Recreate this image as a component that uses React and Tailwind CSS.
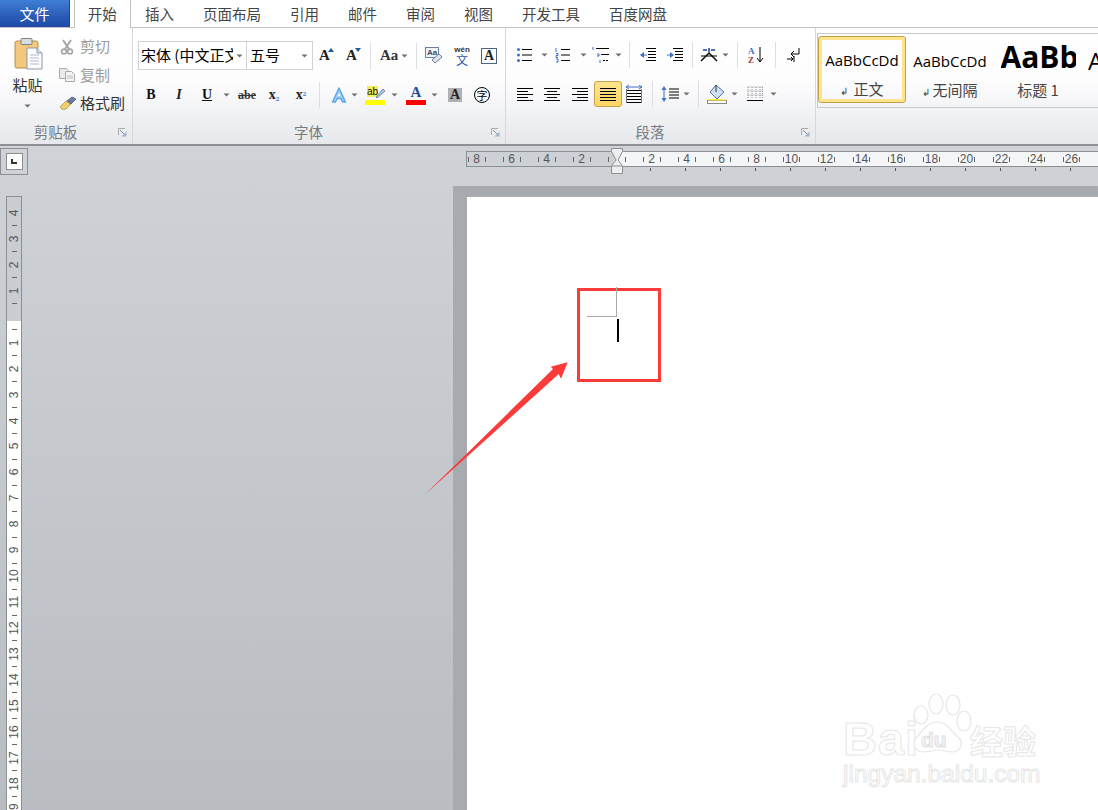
import React from "react";

const CJK = `font-['Noto_Sans_CJK_SC','Noto_Sans',sans-serif]`;

function Caret({ className = "" }) {
  return (
    <svg width="7" height="4" viewBox="0 0 7 4" className={`shrink-0 ${className}`}>
      <path d="M0.5 0.5h6L3.5 3.5z" fill="#6f6f6f" />
    </svg>
  );
}
function Sep({ className = "" }) {
  return <div className={`w-px h-[26px] shrink-0 bg-[#dcdee1] ${className}`} />;
}
function Launcher() {
  return (
    <svg width="9" height="9" viewBox="0 0 9 9" className="shrink-0">
      <path d="M0.5 7V0.5H7" fill="none" stroke="#a9abae" />
      <path d="M3.5 8.5h5v-5z" fill="#a5b4c6" />
      <path d="M2 2l4 4" stroke="#8a8c90" />
    </svg>
  );
}
function GroupLabel({ children, pad }) {
  return (
    <div className="h-[24px] flex items-center shrink-0">
      <div className={`flex-1 text-center text-[14.5px] text-[#777b80] ${pad}`}>{children}</div>
      <Launcher />
      <div className="w-[5px]" />
    </div>
  );
}

function Lines({ w = 16, ys, xs, color = "#000" }) {
  return (
    <svg width={w} height="16" viewBox={`0 0 ${w} 16`} className="shrink-0">
      {ys.map((y, i) => (
        <rect key={i} x={xs[i][0]} y={y} width={xs[i][1]} height="1" fill={color} />
      ))}
    </svg>
  );
}

const Paste = () => (
  <svg width="30" height="34" viewBox="0 0 30 34" className="shrink-0">
    <rect x="1" y="4" width="23" height="27" rx="2" fill="#f3c77e" stroke="#b98f4b" />
    <rect x="7" y="1.5" width="11" height="6" rx="1" fill="#d9dce0" stroke="#7f8184" />
    <path d="M13 11h10l5 5v16H13z" fill="#fbfcfe" stroke="#8d98a6" />
    <path d="M23 11v5h5" fill="#d8e2ee" stroke="#8d98a6" />
    <path d="M16 18h9M16 21h9M16 24h9M16 27h9" stroke="#b2bcc9" />
  </svg>
);
const Scissors = () => (
  <svg width="14" height="16" viewBox="0 0 14 16" className="shrink-0">
    <path d="M3 1l6 9M11 1L5 10" stroke="#a3a5a8" strokeWidth="2" />
    <circle cx="4" cy="12.5" r="2.4" fill="none" stroke="#a3a5a8" strokeWidth="1.6" />
    <circle cx="10" cy="12.5" r="2.4" fill="none" stroke="#a3a5a8" strokeWidth="1.6" />
  </svg>
);
const Copy = () => (
  <svg width="16" height="14" viewBox="0 0 16 14" className="shrink-0">
    <path d="M0.5 0.5h7l2 2v8h-9z" fill="#e9eaec" stroke="#a8aaad" />
    <path d="M6.5 3.5h6l3 3v7h-9z" fill="#f4f4f5" stroke="#a8aaad" />
    <path d="M8 8h6M8 10h6" stroke="#b9bbbd" />
  </svg>
);
const Brush = () => (
  <svg width="18" height="15" viewBox="0 0 18 15" className="shrink-0">
    <path d="M1 11l6-6 5 3-5 5c-3 1-5 0-6-2z" fill="#f0cf6e" stroke="#9c8a4a" strokeWidth=".7" />
    <path d="M8 5l5-4 4 2-5 5z" fill="#6b7aa1" stroke="#444d68" strokeWidth=".7" />
  </svg>
);

const Serif = ({ children, className = "" }) => (
  <div className={`font-['Liberation_Serif',serif] font-bold leading-none shrink-0 text-center ${className}`}>{children}</div>
);

const GrowA = ({ up }) => (
  <div className="relative w-[16px] h-[16px] shrink-0">
    <Serif className="text-[15px] text-[#222] w-[13px]">A</Serif>
    <svg width="6" height="4" viewBox="0 0 6 4" className="absolute right-0 top-0">
      <path d={up ? "M0 4h6L3 0z" : "M0 0h6L3 4z"} fill="#2b579a" />
    </svg>
  </div>
);

const EffectA = () => (
  <svg width="18" height="18" viewBox="0 0 18 18" className="shrink-0">
    <path d="M9 2L2.5 16h3L7 12.5h4L12.5 16h3z" fill="#9ed0f5" stroke="#5aa7e6" strokeWidth="1.4" strokeLinejoin="round" />
    <path d="M7.8 10L9 7l1.2 3z" fill="#fff" />
  </svg>
);
const Highlight = () => (
  <svg width="20" height="20" viewBox="0 0 20 20" className="shrink-0">
    <rect x="0" y="15" width="20" height="5" fill="#ffff00" />
    <rect x="2" y="1" width="11" height="11" fill="#f2ee5c" />
    <text x="2" y="10" fontSize="10" fontFamily="Liberation Sans" fill="#111">ab</text>
    <path d="M11 12l7-8 2 2-8 7z" fill="#a9c4e6" stroke="#4d6f9e" strokeWidth=".7" />
  </svg>
);
const RedA = () => (
  <div className="w-[20px] h-[20px] shrink-0 flex flex-col items-center">
    <Serif className="text-[15px] h-[15px] text-[#1f4e96]">A</Serif>
    <div className="w-[20px] h-[5px] bg-[#ff0000]" />
  </div>
);
const Zi = () => (
  <div className={`w-[16px] h-[16px] shrink-0 rounded-full border border-black flex items-center justify-center text-[11px] leading-none text-black ${CJK}`}>字</div>
);

const Bullets = () => (
  <svg width="16" height="16" viewBox="0 0 16 16" className="shrink-0">
    <circle cx="1.5" cy="2.5" r="1.5" fill="#3f6fc0" /><circle cx="1.5" cy="8" r="1.5" fill="#3f6fc0" /><circle cx="1.5" cy="13.5" r="1.5" fill="#3f6fc0" />
    <path d="M5 2.5h10M5 8h10M5 13.5h10" stroke="#000" />
  </svg>
);
const Numbers = () => (
  <svg width="16" height="16" viewBox="0 0 16 16" className="shrink-0">
    <path d="M1 1v4M1 6.5h2v2H1v2h2M1 12h2v3H1" stroke="#3f6fc0" fill="none" />
    <path d="M6 2.5h9M6 8h9M6 13.5h9" stroke="#000" />
  </svg>
);
const Multi = () => (
  <svg width="18" height="18" viewBox="0 0 18 18" className="shrink-0">
    <path d="M1 1v3M5 8h2v2H5M8 14v3" stroke="#3f6fc0" fill="none" />
    <path d="M4 2.5h13M9 8.5h8" stroke="#000" />
    <path d="M11 14.5h6" stroke="#000" strokeDasharray="2 1" />
  </svg>
);
const Outdent = ({ flip }) => (
  <svg width="16" height="16" viewBox="0 0 16 16" className="shrink-0">
    <path d="M6 1h10M8 4h8M8 7h8M8 10h8M6 13h10" stroke="#000" transform="translate(0 .5)" />
    {flip ? <path d="M0 7.5h3V5l4 3-4 3V8.5H0z" fill="#3f6fc0" /> : <path d="M7 7.5H4V5L0 8l4 3V8.5h3z" fill="#3f6fc0" />}
  </svg>
);
const ChineseLayout = () => (
  <svg width="18" height="16" viewBox="0 0 18 16" className="shrink-0">
    <path d="M1 14L9 6l8 8" stroke="#000" strokeWidth="1.4" fill="none" />
    <path d="M3 3h4M11 3h4M9 1v4" stroke="#1d3f9a" strokeWidth="1.5" />
    <path d="M1 9h16" stroke="#000" />
  </svg>
);
const Sort = () => (
  <svg width="16" height="18" viewBox="0 0 16 18" className="shrink-0">
    <text x="0" y="8" fontSize="9" fontWeight="700" fontFamily="Liberation Serif" fill="#3f6fc0">A</text>
    <text x="0" y="17" fontSize="9" fontWeight="700" fontFamily="Liberation Serif" fill="#a23b3b">Z</text>
    <path d="M12 1v15M9 12l3 4 3-4" stroke="#000" fill="none" />
  </svg>
);
const Para = () => (
  <svg width="14" height="16" viewBox="0 0 14 16" className="shrink-0">
    <path d="M13 1v6H5M5 7l3-3M5 7l3 3" stroke="#000" fill="none" />
    <path d="M1 12h6M7 12l-2-2M7 12l-2 2M8 9v6" stroke="#000" fill="none" />
  </svg>
);
const full = [[0, 16], [0, 16], [0, 16], [0, 16], [0, 16]];
const Align = ({ xs }) => <Lines ys={[2, 5, 8, 11, 14]} xs={xs} />;
const Dist = () => (
  <svg width="16" height="18" viewBox="0 0 16 18" className="shrink-0">
    <path d="M0 2h16M3 0L0 2l3 2M13 0l3 2-3 2" stroke="#3f6fc0" fill="none" />
    <path d="M1 5.5h14M1 8.5h14M1 11.5h14M1 14.5h14M1 17.5h14" stroke="#000" />
    <path d="M.5 4v14M15.5 4v14" stroke="#777" />
  </svg>
);
const LineSp = () => (
  <svg width="18" height="18" viewBox="0 0 18 18" className="shrink-0">
    <path d="M3 1L.5 5h5zM3 17L.5 13h5z" fill="#3f6fc0" />
    <path d="M3 5v8" stroke="#3f6fc0" />
    <path d="M8 4h10M8 7h10M8 10h10M8 13h10" stroke="#000" />
  </svg>
);
const Shade = () => (
  <svg width="20" height="20" viewBox="0 0 20 20" className="shrink-0">
    <path d="M9 1l8 7-7 7-7-7z" fill="#cfe0f3" stroke="#4d6f9e" />
    <path d="M9 1v7" stroke="#333" />
    <rect x=".5" y="16.5" width="19" height="3" fill="#fff" stroke="#888" />
    <rect x="1" y="15" width="18" height="1.5" fill="#ffee44" />
  </svg>
);
const BorderIcon = () => (
  <svg width="16" height="16" viewBox="0 0 16 16" className="shrink-0">
    <path d="M.5 1h15M.5 5h15M.5 9h15M1 1v11M5 1v11M9 1v11M13 1v11M15.5 1v11" stroke="#9a9a9a" strokeDasharray="1 1" fill="none" />
    <path d="M0 14.5h16" stroke="#000" />
  </svg>
);

function Tab({ children }) {
  return <div className="px-[14.5px] text-[14.5px] leading-[27px] text-[#444]">{children}</div>;
}

function Tabs() {
  return (
    <div className={`h-[28px] flex bg-white border-b border-[#bfc1c4] relative shrink-0`}>
      <div className="w-[70px] h-[27px] bg-[linear-gradient(#3f7fd6,#2b5cb5_60%,#1c4ba8)] text-white text-[15px] leading-[27px] text-center border-r border-[#1d478f]">文件</div>
      <div className="ml-[4px] w-[56.5px] h-[28px] bg-white border-x border-b-0 border-[#bfc1c4] rounded-b-none text-[14.5px] leading-[27px] text-center text-[#444] z-10">开始</div>
      <Tab>插入</Tab>
      <Tab>页面布局</Tab>
      <Tab>引用</Tab>
      <Tab>邮件</Tab>
      <Tab>审阅</Tab>
      <Tab>视图</Tab>
      <Tab>开发工具</Tab>
      <Tab>百度网盘</Tab>
    </div>
  );
}

function Clipboard() {
  return (
    <div className="w-[133px] shrink-0 flex flex-col border-r border-[#d6d8db]">
      <div className="flex-1 flex">
        <div className="w-[57px] flex flex-col items-center shrink-0 pl-[1px] pr-[3px] pt-[9px]">
          <div className="ml-[2px]"><Paste /></div>
          <div className="text-[15px] leading-[18px] mt-[5px] text-[#333]">粘贴</div>
          <Caret className="mt-[10px]" />
        </div>
        <div className="flex flex-col pt-[8px] gap-[7.5px]">
          <div className="flex items-center h-[21px] text-[15px] text-[#9a9c9f]"><div className="w-[17px] ml-[3px]"><Scissors /></div><span className="ml-[3px]">剪切</span></div>
          <div className="flex items-center h-[21px] text-[15px] text-[#9a9c9f]"><div className="w-[20px] ml-[2px]"><Copy /></div><span className="ml-[1px]">复制</span></div>
          <div className="flex items-center h-[21px] text-[15px] text-[#333]"><div className="w-[20px] ml-[2px]"><Brush /></div><span className="ml-[1px]">格式刷</span></div>
        </div>
      </div>
      <GroupLabel pad="pr-[7px]">剪贴板</GroupLabel>
    </div>
  );
}

function Font() {
  return (
    <div className="w-[373px] shrink-0 flex flex-col border-r border-[#d6d8db]">
      <div className="flex-1">
        <div className="flex items-center mt-[13px] h-[29px] pl-[5px]">
          <div className="w-[109px] h-[29px] bg-white border border-[#d0d2d5] flex items-center text-[15px] text-black pl-[2px] whitespace-nowrap overflow-hidden">
            <span className="w-[92px] overflow-hidden shrink-0">宋体 (中文正文</span><Caret className="ml-[3px]" />
          </div>
          <div className="w-[66px] h-[29px] bg-white border border-l-0 border-[#d0d2d5] flex items-center text-[15px] text-black pl-[3px]">
            <span className="flex-1">五号</span><Caret className="mr-[4px]" />
          </div>
          <div className="ml-[5px]"><GrowA up /></div>
          <div className="ml-[11px] w-[14px]"><GrowA /></div>
          <Sep className="ml-[11px]" />
          <Serif className="ml-[9px] w-[18px] text-[15px] text-[#333]">Aa</Serif>
          <Caret className="ml-[3px]" />
          <Sep className="ml-[8px]" />
          <svg width="18" height="18" viewBox="0 0 18 18" className="ml-[8px] shrink-0">
            <rect x=".5" y=".5" width="13" height="10" fill="#eef3fa" stroke="#6c7f99" />
            <text x="2" y="8" fontSize="8" fontFamily="Liberation Sans" fontWeight="700" fill="#3a4a66">Aa</text>
            <path d="M7 13l7-6 3 3-7 6z" fill="#dfe6ef" stroke="#6c7f99" />
          </svg>
          <div className="ml-[10px] w-[18px] h-[20px] shrink-0 relative flex flex-col items-center overflow-visible">
            <span className="text-[8px] h-[8px] leading-[8px] font-bold text-[#333] font-['Liberation_Sans',sans-serif]">wén</span>
            <span className="text-[12px] h-[12px] leading-[12px] text-[#2a55b0]">文</span>
          </div>
          <div className="ml-[10px] w-[16px] h-[16px] shrink-0 border border-[#4d6485] bg-white flex items-center justify-center">
            <Serif className="text-[14px] text-[#222]">A</Serif>
          </div>
        </div>
        <div className="flex items-center mt-[12px] h-[26px] pl-[5px]">
          <Serif className="ml-[5px] w-[16px] text-[14px] text-[#111]">B</Serif>
          <Serif className="ml-[12px] w-[16px] text-[14px] text-[#222] italic">I</Serif>
          <Serif className="ml-[12px] w-[16px] text-[14px] text-[#111] underline">U</Serif>
          <Caret className="ml-[8px]" />
          <Serif className="ml-[6px] w-[22px] text-[12px] text-[#333] line-through">abe</Serif>
          <Serif className="ml-[8px] w-[16px] text-[14px] text-[#222]">x<sub className="text-[7px] text-[#3f6fc0]">2</sub></Serif>
          <Serif className="ml-[11px] w-[16px] text-[14px] text-[#222]">x<sup className="text-[7px] text-[#3f6fc0]">2</sup></Serif>
          <Sep className="ml-[10px]" />
          <div className="ml-[10px]"><EffectA /></div>
          <Caret className="ml-[3px]" />
          <div className="ml-[7px]"><Highlight /></div>
          <Caret className="ml-[6px]" />
          <div className="ml-[8px]"><RedA /></div>
          <Caret className="ml-[5px]" />
          <div className="ml-[10px] w-[14px] h-[14px] bg-[#aeb0b3] flex items-center justify-center shrink-0"><Serif className="text-[14px] text-[#222]">A</Serif></div>
          <div className="ml-[12px]"><Zi /></div>
        </div>
      </div>
      <GroupLabel pad="pr-[7px]">字体</GroupLabel>
    </div>
  );
}

function Paragraph() {
  return (
    <div className="w-[310px] shrink-0 flex flex-col border-r border-[#d6d8db]">
      <div className="flex-1">
        <div className="flex items-center mt-[14px] h-[26px]">
          <div className="ml-[11px]"><Bullets /></div>
          <Caret className="ml-[8px]" />
          <div className="ml-[7px]"><Numbers /></div>
          <Caret className="ml-[9px]" />
          <div className="ml-[5px]"><Multi /></div>
          <Caret className="ml-[5px]" />
          <Sep className="ml-[7px]" />
          <div className="ml-[10px]"><Outdent /></div>
          <div className="ml-[11px]"><Outdent flip /></div>
          <Sep className="ml-[9px]" />
          <div className="ml-[7px]"><ChineseLayout /></div>
          <Caret className="ml-[4px]" />
          <Sep className="ml-[8px]" />
          <div className="ml-[10px]"><Sort /></div>
          <Sep className="ml-[11px]" />
          <div className="ml-[10px]"><Para /></div>
        </div>
        <div className="flex items-center mt-[13px] h-[26px]">
          <div className="ml-[11px]"><Align xs={[[0, 16], [0, 11], [0, 16], [0, 11], [0, 16]]} /></div>
          <div className="ml-[11px]"><Align xs={[[0, 16], [3, 10], [0, 16], [3, 10], [0, 16]]} /></div>
          <div className="ml-[12px]"><Align xs={[[0, 16], [5, 11], [0, 16], [5, 11], [0, 16]]} /></div>
          <div className="ml-[6px] w-[28px] h-[26px] flex items-center justify-center rounded-[3px] border border-[#c7a14a] bg-[linear-gradient(#ffe591,#ffd662)]"><Align xs={full} /></div>
          <div className="ml-[4px]"><Dist /></div>
          <Sep className="ml-[10px]" />
          <div className="ml-[8px]"><LineSp /></div>
          <Caret className="ml-[4px]" />
          <Sep className="ml-[8px]" />
          <div className="ml-[8px]"><Shade /></div>
          <Caret className="ml-[4px]" />
          <div className="ml-[9px]"><BorderIcon /></div>
          <Caret className="ml-[7px]" />
        </div>
      </div>
      <GroupLabel pad="pr-[7px]">段落</GroupLabel>
    </div>
  );
}

function StyleCell({ w, label, children, selected }) {
  return (
    <div className={`${w} h-[67px] shrink-0 flex flex-col items-center ${selected ? "rounded-[3px] border border-[#c2a048] shadow-[inset_0_0_0_3px_#ffe48d]" : "pt-[1px]"}`}>
      <div className="h-[42px] w-full flex items-center justify-center overflow-hidden">{children}</div>
      <div className="text-[15px] leading-[22px] text-[#444] whitespace-nowrap">{label}</div>
    </div>
  );
}

function Styles() {
  return (
    <div className="flex-1 min-w-0 pt-[5px] pl-[1px]">
      <div className="h-[75px] border border-r-0 border-[#c8cacd] flex items-start pt-[2px] overflow-hidden">
        <StyleCell w="w-[88px]" selected label={<span><span className="text-[10px] mr-[5px]">↲</span>正文</span>}>
          <span className="text-[15px] mt-[6px] text-black font-['Open_Sans',sans-serif]">AaBbCcDd</span>
        </StyleCell>
        <StyleCell w="w-[88px]" label={<span><span className="text-[10px] mr-[2px]">↲</span>无间隔</span>}>
          <span className="text-[15px] mt-[6px] text-black font-['Open_Sans',sans-serif]">AaBbCcDd</span>
        </StyleCell>
        <StyleCell w="w-[88px]" label="标题 1">
          <span className="text-[30px] -mt-[2px] leading-none font-bold text-black font-['Open_Sans',sans-serif] w-[75px] overflow-hidden block whitespace-nowrap">AaBb</span>
        </StyleCell>
        <div className="h-[46px] flex items-center ml-[6px]"><span className="text-[24px] mt-[4px] leading-none font-['Open_Sans',sans-serif]">A</span></div>
      </div>
    </div>
  );
}

function HRuler() {
  const labels = ["8", "6", "4", "2", "", "2", "4", "6", "8", "10", "12", "14", "16", "18", "20", "22", "24", "26"];
  return (
    <div className="ml-[466px] mt-[5px] h-[16px] relative overflow-visible">
      <div className="h-[16px] border-y border-l border-[#8c8e91] overflow-hidden bg-[linear-gradient(90deg,#cdd0d4_0,#cdd0d4_150px,#f4f5f6_150px)]">
        <div className="flex h-[14px] -ml-[8px] w-[700px]">
          {labels.map((l, i) => (
            <div key={i} className="w-[35px] shrink-0 flex items-center justify-between px-[8.5px] text-[12px] leading-none text-[#555] font-['Liberation_Sans',sans-serif]">
              <div className="w-px h-[5px] bg-[#666]" />
              <span>{l}</span>
              <div className="w-px h-[5px] bg-[#666]" />
            </div>
          ))}
        </div>
      </div>
      <svg width="12" height="26" viewBox="0 0 12 26" className="absolute left-[145px] -top-[3px]">
        <path d="M.5.5h11v3L7 12l4.5 6v7.5H.5V18L5 12 .5 3.5z" fill="#eceef0" stroke="#8c8e91" />
        <path d="M.5 18h11" stroke="#8c8e91" />
      </svg>
      <div className="flex -ml-[8px] mt-[1px] w-[700px]">
        {labels.map((l, i) => (
          <div key={i} className="w-[35px] shrink-0 flex justify-center">{i > 4 && <div className="w-px h-[3px] bg-[#555]" />}</div>
        ))}
      </div>
    </div>
  );
}

function VRuler() {
  const labels = ["4", "3", "2", "1", "", "1", "2", "3", "4", "5", "6", "7", "8", "9", "10", "11", "12", "13", "14", "15", "16", "17", "18", "19"];
  return (
    <div className="ml-[6px] mt-[10px] w-[16px] border-x border-t border-[#8c8e91] overflow-hidden h-[620px] shrink-0 bg-[linear-gradient(#c9ccd1_0,#c9ccd1_124px,#ffffff_124px)]">
      <div className="pt-[3px] flex flex-col items-center">
        {labels.map((l, i) => (
          <React.Fragment key={i}>
            <div className="h-[25.95px] flex items-center justify-center text-[12px] leading-none text-[#555] -rotate-90 font-['Liberation_Sans',sans-serif]">{l}</div>
            <div className="h-0 flex items-center"><div className="w-[5px] h-px bg-[#666]" /></div>
          </React.Fragment>
        ))}
      </div>
    </div>
  );
}

function Watermark() {
  const stroke = "text-white [-webkit-text-stroke:1px_#e6e6e6]";
  return (
    <div className="absolute left-[843px] top-[690px] w-[210px] h-[100px] font-['Liberation_Sans',sans-serif]">
      <div className={`absolute left-0 top-[24px] text-[47px] leading-[50px] font-bold ${stroke} tracking-[1px]`}>Bai</div>
      <svg width="66" height="68" viewBox="0 0 66 68" className="absolute left-[63px] top-[2px]">
        <g fill="#fff" stroke="#e6e6e6" strokeWidth="1.2">
          <ellipse cx="15" cy="23" rx="7" ry="9" />
          <ellipse cx="30" cy="12" rx="7" ry="10" />
          <ellipse cx="47" cy="13" rx="7" ry="10" />
          <ellipse cx="58" cy="29" rx="7" ry="10" />
          <path d="M32 30c10 0 13 10 20 15 6 5 3 15-6 15-5 0-9-2-14-2s-9 2-14 2c-9 0-12-8-8-14 6-6 10-16 22-16z" />
        </g>
      </svg>
      <div className={`absolute left-[78px] top-[38px] text-[21px] leading-[24px] font-bold text-[#f4f4f4] [-webkit-text-stroke:1px_#e0e0e0]`}>du</div>
      <div className={`absolute left-[127px] top-[30px] text-[33px] leading-[40px] font-bold ${stroke} ${CJK}`}>经验</div>
      <div className={`absolute left-0 top-[70px] text-[24.5px] leading-[28px] ${stroke}`}>jingyan.baidu.com</div>
    </div>
  );
}

function Annotations() {
  return (
    <>
      <div className="absolute left-[577px] top-[288px] w-[84px] h-[94px] border-[3px] border-[#fb3a3a]" />
      <div className="absolute left-[616px] top-[287px] w-px h-[29px] bg-[#aaaaaa]" />
      <div className="absolute left-[587px] top-[316px] w-[30px] h-px bg-[#aaaaaa]" />
      <div className="absolute left-[617px] top-[319px] w-[2px] h-[23px] bg-black" />
      <svg width="1098" height="810" viewBox="0 0 1098 810" className="absolute left-0 top-0 pointer-events-none">
        <polygon points="425,494.5 553,369 550.7,366.7 567.7,362.3 561,378.7 558.7,374" fill="#fb3a3a" />
      </svg>
    </>
  );
}

export default function App() {
  return (
    <div className={`relative w-[1098px] h-[810px] overflow-hidden flex flex-col bg-white ${CJK}`}>
      <Tabs />
      <div className="h-[116px] shrink-0 flex bg-[linear-gradient(#ffffff_0,#fdfdfe_45%,#f0f1f3_75%,#e6e8eb_100%)]">
        <Clipboard />
        <Font />
        <Paragraph />
        <Styles />
      </div>
      <div className="h-[2px] shrink-0 bg-[#8e9094]" />
      <div className="flex-1 min-h-0 flex flex-col bg-[linear-gradient(#cfd2d6,#b9bcc1)]">
        <div className="h-[40px] shrink-0 relative">
          <div className="absolute left-0 top-[2px] w-[28px] h-[27px] border border-[#8c8e91] flex items-center justify-center">
            <div className="w-[17px] h-[17px] bg-white border border-[#8c8e91] flex items-center justify-center">
              <div className="w-[6px] h-[5px] border-l-2 border-b-2 border-[#333]" />
            </div>
          </div>
          <HRuler />
        </div>
        <div className="flex-1 min-h-0 flex">
          <VRuler />
          <div className="ml-[431px] flex-1 min-w-0 pt-[11px] pl-[14px] bg-[#a7aaaf]">
            <div className="h-full bg-white" />
          </div>
        </div>
      </div>
      <Annotations />
      <Watermark />
    </div>
  );
}
